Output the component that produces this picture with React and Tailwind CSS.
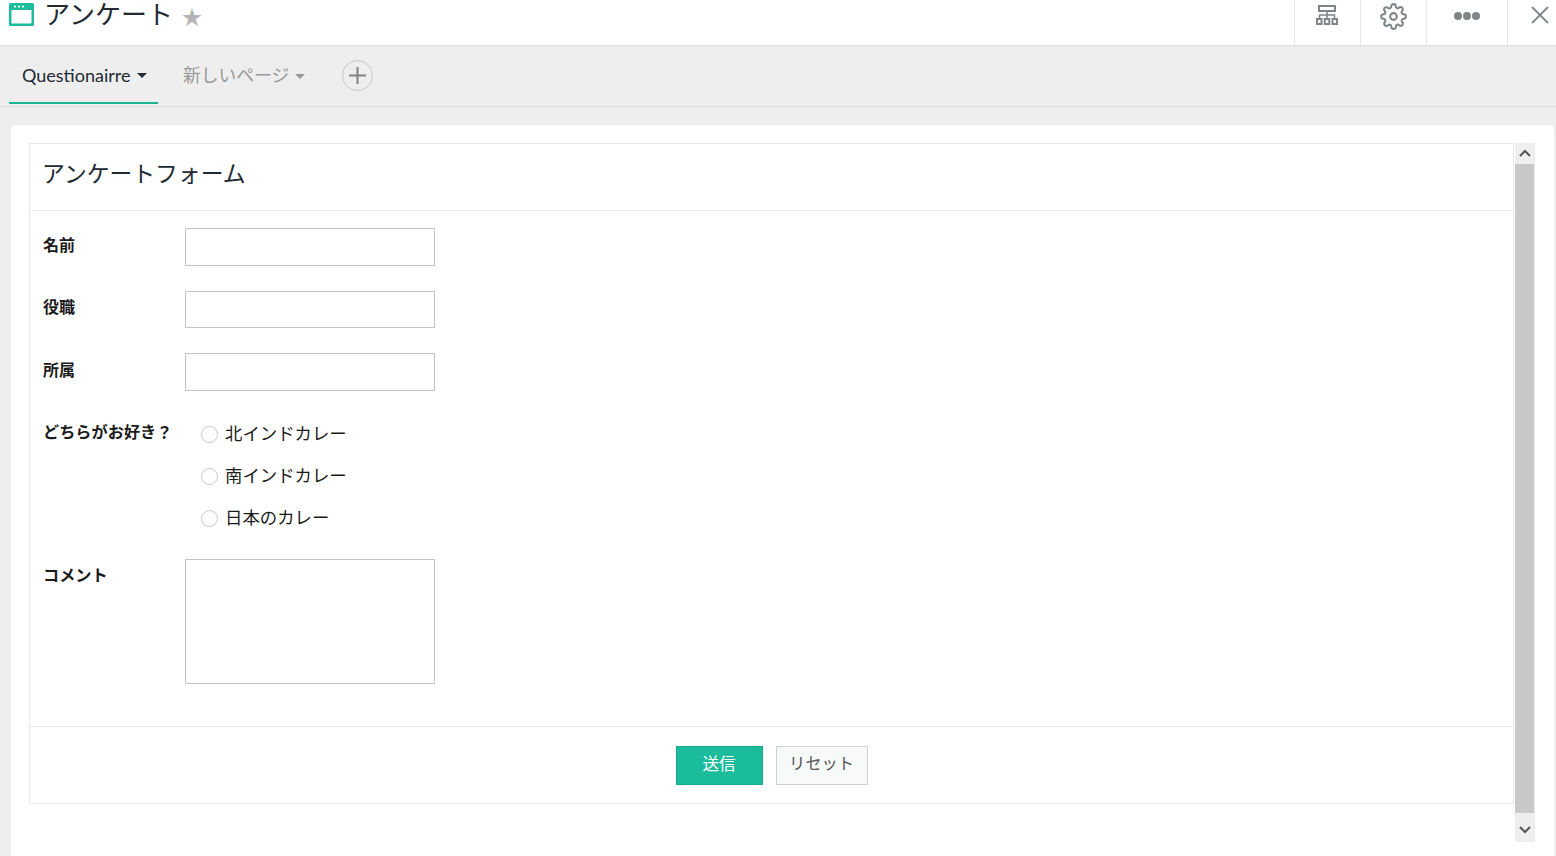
import React from 'react';
import { FiSettings } from 'react-icons/fi';

const fields = [
  { label: '名前', height: 'h-[38px]', mt: 'mt-[17px]', labelPt: 'pt-[5px]' },
  { label: '役職', height: 'h-[37px]', mt: 'mt-[25px]', labelPt: 'pt-[4px]' },
  { label: '所属', height: 'h-[38px]', mt: 'mt-[25px]', labelPt: 'pt-[5px]' },
];

const choices = ['北インドカレー', '南インドカレー', '日本のカレー'];

const WindowIcon = () => (
  <svg width="25" height="23" viewBox="0 0 25 23" className="shrink-0">
    <rect x="0" y="0" width="25" height="23" rx="1.5" fill="#1abc9c" />
    <rect x="2.5" y="7" width="20" height="13.5" fill="#fff" />
    <circle cx="6" cy="3.6" r="1.1" fill="#fff" />
    <circle cx="10" cy="3.6" r="1.1" fill="#fff" />
    <circle cx="14" cy="3.6" r="1.1" fill="#fff" />
  </svg>
);

const SitemapIcon = () => (
  <svg width="22" height="20" viewBox="0 0 22 20" fill="none" stroke="#808589" strokeWidth="2">
    <rect x="3" y="1" width="16" height="5" />
    <path d="M11 6v4M3.5 14v-4h15v4M11 10v4" strokeWidth="1.5" />
    <rect x="1" y="14" width="4.5" height="5" />
    <rect x="8.75" y="14" width="4.5" height="5" />
    <rect x="16.5" y="14" width="4.5" height="5" />
  </svg>
);

const Chevron = ({ up }) => (
  <svg width="12" height="8" viewBox="0 0 12 8" fill="none" stroke="#555" strokeWidth="2">
    <path d={up ? 'M1 7l5-5 5 5' : 'M1 1l5 5 5-5'} />
  </svg>
);

const HeaderCell = ({ width, children }) => (
  <div className={`${width} h-[45px] flex items-start justify-center border-l border-[#e3e8ea]`}>
    {children}
  </div>
);

const App = () => {
  return (
    <div className="h-[856px] overflow-hidden flex flex-col bg-[#eeeeee] text-[#1b1b1b] font-['Lato','Noto_Sans_CJK_JP',sans-serif]">
      <header className="h-[46px] shrink-0 bg-white border-b border-[#dddddd] flex items-start">
        <div className="flex items-start flex-1 pl-[9px] pt-[3px]">
          <WindowIcon />
          <span className="ml-[10px] -mt-[3px] text-[26px] leading-[28px] text-[#222a33]">アンケート</span>
          <span className="ml-[9px] mt-[3px] text-[#b4b4b4] text-[20px] leading-[22px]">★</span>
        </div>
        <HeaderCell width="w-[66px]">
          <div className="mt-[5px] -ml-[2px]"><SitemapIcon /></div>
        </HeaderCell>
        <HeaderCell width="w-[66px]">
          <FiSettings className="mt-[3px]" size={27} strokeWidth={1.8} color="#808589" />
        </HeaderCell>
        <HeaderCell width="w-[81px]">
          <div className="mt-[12px] flex gap-[1px]">
            <span className="w-[8px] h-[8px] rounded-full bg-[#808589]" />
            <span className="w-[8px] h-[8px] rounded-full bg-[#808589]" />
            <span className="w-[8px] h-[8px] rounded-full bg-[#808589]" />
          </div>
        </HeaderCell>
        <HeaderCell width="w-[49px]">
          <svg className="mt-[6px] ml-[15px]" width="18" height="18" viewBox="0 0 18 18" stroke="#808589" strokeWidth="1.8">
            <path d="M1 1l16 16M17 1L1 17" />
          </svg>
        </HeaderCell>
      </header>

      <nav className="h-[61px] shrink-0 border-b border-[#dddddd] flex items-start pl-[9px]">
        <div className="h-[58px] w-[149px] border-b-2 border-[#1ab394] flex items-center pl-[13px] pt-[2px] text-[18px] text-[#222a33]">
          Questionairre
          <span className="ml-[7px] mt-[1px] w-0 h-0 border-x-[5px] border-x-transparent border-t-[5px] border-t-[#222a33]" />
        </div>
        <div className="h-[58px] ml-[25px] flex items-center text-[17.8px] text-[#999999]">
          新しいページ
          <span className="ml-[6px] mt-[2px] w-0 h-0 border-x-[5px] border-x-transparent border-t-[5px] border-t-[#999999]" />
        </div>
        <div className="ml-[37px] mt-[14px] w-[31px] h-[31px] rounded-full border border-[#c8c8c8] flex items-center justify-center">
          <svg width="17" height="17" viewBox="0 0 17 17" stroke="#808080" strokeWidth="2">
            <path d="M8.5 0v17M0 8.5h17" />
          </svg>
        </div>
      </nav>

      <div className="flex-1 ml-[11px] mr-[2px] mt-[18px] bg-white rounded-t-[5px] pt-[18px] pl-[18px] pr-[19px] flex items-start gap-[1px]">
        <div className="flex-1 h-[661px] border border-[#e8e8e8] flex flex-col">
          <div className="h-[67px] shrink-0 border-b border-[#e8e8e8] flex items-center pl-[12px] pb-[8px] text-[22.8px] text-[#222a33]">
            アンケートフォーム
          </div>

          <div className="flex-1 pl-[13px]">
            {fields.map((f) => (
              <div key={f.label} className={`flex items-start ${f.mt}`}>
                <label className={`w-[142px] text-[16px] leading-[24px] font-bold ${f.labelPt}`}>{f.label}</label>
                <input type="text" className={`w-[250px] ${f.height} border border-[#c4c4c4] bg-white`} />
              </div>
            ))}

            <div className="flex items-start mt-[21px]">
              <label className="w-[142px] pt-[8px] text-[16.2px] leading-[24px] font-bold whitespace-nowrap">どちらがお好き？</label>
              <div className="flex flex-col pl-[16px]">
                {choices.map((c) => (
                  <div key={c} className="h-[42px] flex items-center text-[17.4px]">
                    <span className="w-[17px] h-[17px] rounded-full border border-[#c8c8c8] mr-[7px] mt-[2px]" />
                    <span className="mt-[2px]">{c}</span>
                  </div>
                ))}
              </div>
            </div>

            <div className="flex items-start mt-[21px]">
              <label className="w-[142px] pt-[4px] text-[16.2px] leading-[24px] font-bold">コメント</label>
              <textarea className="w-[250px] h-[125px] border border-[#c4c4c4] bg-white resize-none" />
            </div>
          </div>

          <div className="h-[77px] shrink-0 border-t border-[#e8e8e8] flex items-start justify-center gap-[13px] pt-[19px]">
            <button className="w-[87px] h-[39px] bg-[#1abc9c] border border-[#16ab8d] text-white text-[16.5px] pb-[3px]">送信</button>
            <button className="w-[92px] h-[39px] bg-[#f8f9f9] border border-[#d0d0d4] text-[#555555] text-[16.3px] pb-[4px]">リセット</button>
          </div>
        </div>

        <div className="w-[20px] h-[699px] shrink-0 bg-[#eeeeee] flex flex-col">
          <div className="h-[21px] flex items-center justify-center pb-[2px]"><Chevron up /></div>
          <div className="flex-1 bg-[#c8c8c8] mr-[1px]" />
          <div className="h-[29px] flex items-center justify-center pt-[5px]"><Chevron /></div>
        </div>
      </div>
    </div>
  );
};

export default App;
